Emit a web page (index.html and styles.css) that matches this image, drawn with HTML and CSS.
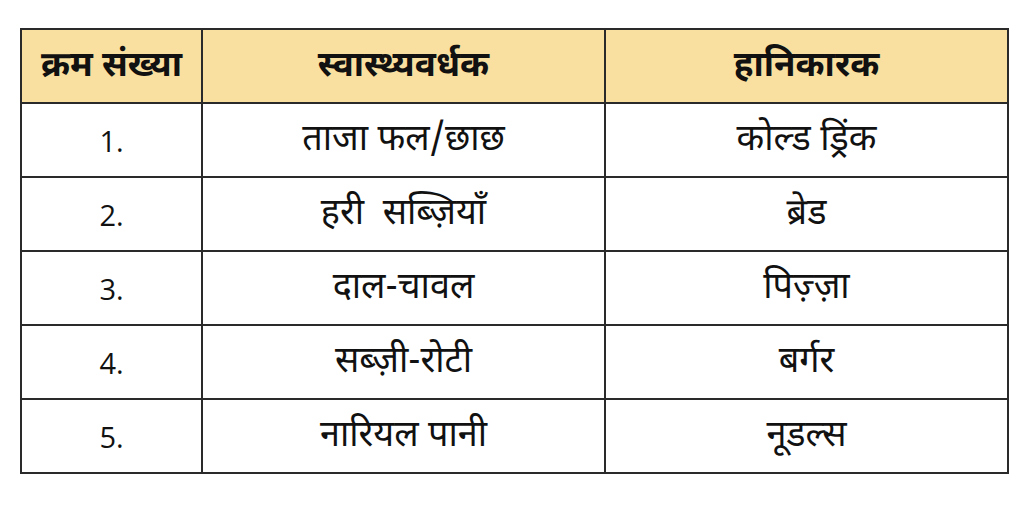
FILE: index.html
```html
<!DOCTYPE html>
<html lang="hi">
<head>
<meta charset="utf-8">
<link rel="stylesheet" href="styles.css">
</head>
<body>
<div class="page">
<table class="tbl">
<colgroup><col class="c1"><col class="c2"><col class="c3"></colgroup>
<thead>
<tr><th><div class="cell">क्रम संख्या</div></th><th><div class="cell">स्वास्थ्यवर्धक</div></th><th><div class="cell">हानिकारक</div></th></tr>
</thead>
<tbody>
<tr><td><div class="cell num">1.</div></td><td><div class="cell">ताजा फल/छाछ</div></td><td><div class="cell">कोल्ड ड्रिंक</div></td></tr>
<tr><td><div class="cell num">2.</div></td><td><div class="cell">हरी &nbsp;सब्ज़ियाँ</div></td><td><div class="cell">ब्रेड</div></td></tr>
<tr><td><div class="cell num">3.</div></td><td><div class="cell">दाल-चावल</div></td><td><div class="cell">पिज़्ज़ा</div></td></tr>
<tr><td><div class="cell num">4.</div></td><td><div class="cell">सब्ज़ी-रोटी</div></td><td><div class="cell">बर्गर</div></td></tr>
<tr><td><div class="cell num">5.</div></td><td><div class="cell">नारियल पानी</div></td><td><div class="cell">नूडल्स</div></td></tr>
</tbody>
</table>
</div>
</body>
</html>
```
FILE: styles.css
```css
html, body { margin: 0; padding: 0; background: #fff; }
.page { padding: 28px 0 0 20px; }
.tbl {
  border-collapse: collapse;
  width: 987px;
  table-layout: fixed;
  font-family: "Noto Sans Devanagari", "Lohit Devanagari", "Noto Sans", sans-serif;
  color: #111;
}
.c1 { width: 181px; }
.c2 { width: 403px; }
.c3 { width: 403px; }
.tbl th, .tbl td {
  border: 2px solid #2a2a2a;
  padding: 0;
}
.tbl th { background: #f9e0a0; }
.cell {
  height: 68px;
  padding-top: 4px;
  display: flex;
  align-items: center;
  justify-content: center;
  line-height: 1;
  font-size: 36px;
  font-weight: 400;
  overflow: visible;
}
.tbl th .cell {
  font-size: 35px;
  font-weight: 700;
  height: 69px;
  padding-top: 3px;
}
.cell.num {
  font-family: "Open Sans", "Liberation Sans", sans-serif;
  font-size: 29px;
  padding-top: 0;
  height: 71px;
}
```
